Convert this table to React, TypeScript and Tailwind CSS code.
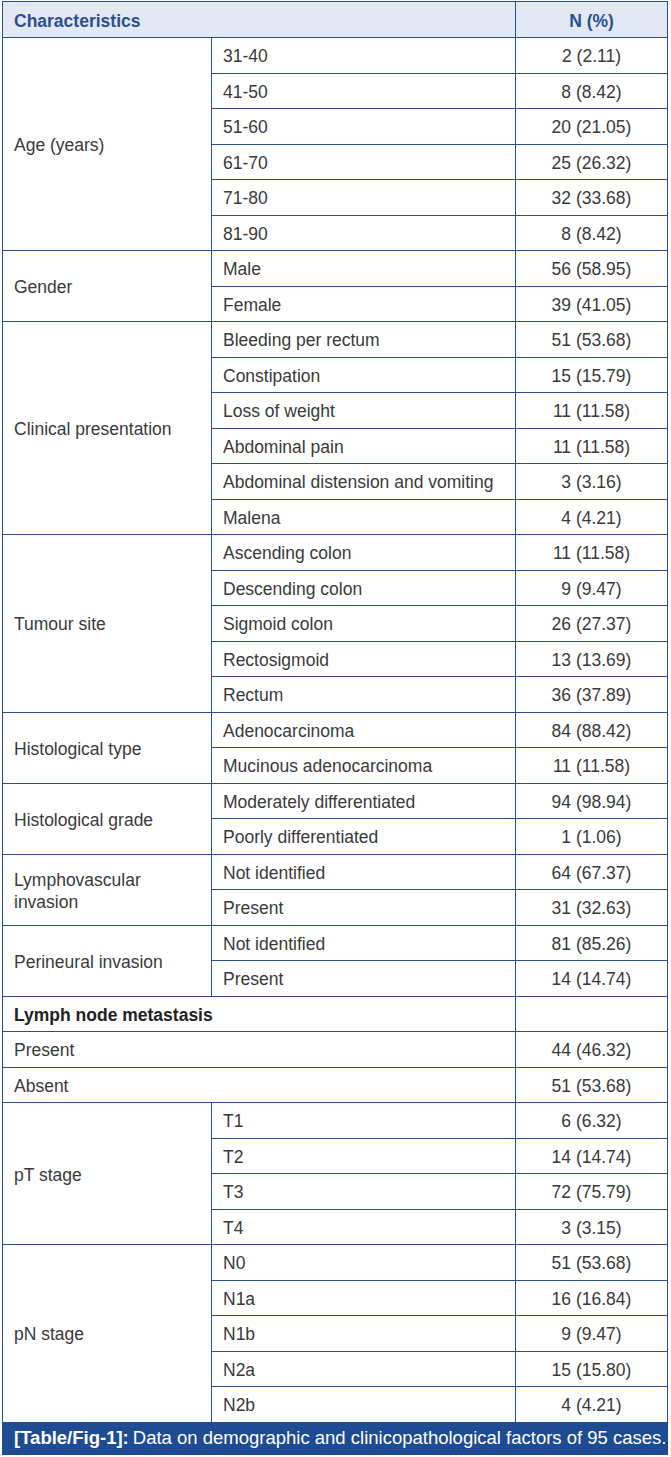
import type { ReactNode } from 'react';

type Group = { label: ReactNode; span: string; items: [string, string][] };

const groups: Group[] = [
  {
    label: 'Age (years)',
    span: 'row-span-6',
    items: [
      ['31-40', '2 (2.11)'],
      ['41-50', '8 (8.42)'],
      ['51-60', '20 (21.05)'],
      ['61-70', '25 (26.32)'],
      ['71-80', '32 (33.68)'],
      ['81-90', '8 (8.42)'],
    ],
  },
  {
    label: 'Gender',
    span: 'row-span-2',
    items: [
      ['Male', '56 (58.95)'],
      ['Female', '39 (41.05)'],
    ],
  },
  {
    label: 'Clinical presentation',
    span: 'row-span-6',
    items: [
      ['Bleeding per rectum', '51 (53.68)'],
      ['Constipation', '15 (15.79)'],
      ['Loss of weight', '11 (11.58)'],
      ['Abdominal pain', '11 (11.58)'],
      ['Abdominal distension and vomiting', '3 (3.16)'],
      ['Malena', '4 (4.21)'],
    ],
  },
  {
    label: 'Tumour site',
    span: 'row-span-5',
    items: [
      ['Ascending colon', '11 (11.58)'],
      ['Descending colon', '9 (9.47)'],
      ['Sigmoid colon', '26 (27.37)'],
      ['Rectosigmoid', '13 (13.69)'],
      ['Rectum', '36 (37.89)'],
    ],
  },
  {
    label: 'Histological type',
    span: 'row-span-2',
    items: [
      ['Adenocarcinoma', '84 (88.42)'],
      ['Mucinous adenocarcinoma', '11 (11.58)'],
    ],
  },
  {
    label: 'Histological grade',
    span: 'row-span-2',
    items: [
      ['Moderately differentiated', '94 (98.94)'],
      ['Poorly differentiated', '1 (1.06)'],
    ],
  },
  {
    label: (
      <>
        Lymphovascular
        <br />
        invasion
      </>
    ),
    span: 'row-span-2',
    items: [
      ['Not identified', '64 (67.37)'],
      ['Present', '31 (32.63)'],
    ],
  },
  {
    label: 'Perineural invasion',
    span: 'row-span-2',
    items: [
      ['Not identified', '81 (85.26)'],
      ['Present', '14 (14.74)'],
    ],
  },
];

const stages: Group[] = [
  {
    label: 'pT stage',
    span: 'row-span-4',
    items: [
      ['T1', '6 (6.32)'],
      ['T2', '14 (14.74)'],
      ['T3', '72 (75.79)'],
      ['T4', '3 (3.15)'],
    ],
  },
  {
    label: 'pN stage',
    span: 'row-span-5',
    items: [
      ['N0', '51 (53.68)'],
      ['N1a', '16 (16.84)'],
      ['N1b', '9 (9.47)'],
      ['N2a', '15 (15.80)'],
      ['N2b', '4 (4.21)'],
    ],
  },
];

const cell = 'flex items-center bg-white px-[11px] pt-[2px] leading-[22px]';
const num = 'flex items-center justify-center bg-white pt-[2px] leading-[22px]';

function GroupRows({ g }: { g: Group }) {
  return (
    <>
      <div className={`${cell} ${g.span}`}>
        <span>{g.label}</span>
      </div>
      {g.items.map(([sub, val], i) => (
        <div key={i} className="contents">
          <div className={cell}>{sub}</div>
          <div className={num}>{val}</div>
        </div>
      ))}
    </>
  );
}

export default function App() {
  return (
    <div className="min-h-[1457px] bg-white pt-px font-['Liberation_Sans',Arial,sans-serif] text-[17.5px] text-[#3a3a3a]">
      <div className="ml-[2px] w-[666px]">
        <div className="grid grid-cols-[208px_303px_151px] grid-rows-[35px_repeat(39,34.5px)] gap-px bg-[#2d4f8f] p-px pb-0">
          <div className="col-span-2 flex items-center bg-[#e2e8f4] px-[11px] pt-[3px] font-bold text-[#2d4f8f]">
            Characteristics
          </div>
          <div className="flex items-center justify-center bg-[#e2e8f4] pt-[3px] font-bold text-[#2d4f8f]">
            N (%)
          </div>

          {groups.map((g, i) => (
            <GroupRows key={i} g={g} />
          ))}

          <div className={`${cell} col-span-2 font-bold text-[#222]`}>Lymph node metastasis</div>
          <div className="bg-white" />
          <div className={`${cell} col-span-2`}>Present</div>
          <div className={num}>44 (46.32)</div>
          <div className={`${cell} col-span-2`}>Absent</div>
          <div className={num}>51 (53.68)</div>

          {stages.map((g, i) => (
            <GroupRows key={i} g={g} />
          ))}
        </div>
        <div className="flex h-[33px] items-center overflow-hidden whitespace-nowrap bg-[#1f4b92] pl-[12px] text-[18.5px] text-white">
          <span className="shrink-0 font-bold">[Table/Fig-1]:</span>
          <span className="ml-[4px] shrink-0">Data on demographic and clinicopathological factors of 95 cases.</span>
        </div>
      </div>
    </div>
  );
}
